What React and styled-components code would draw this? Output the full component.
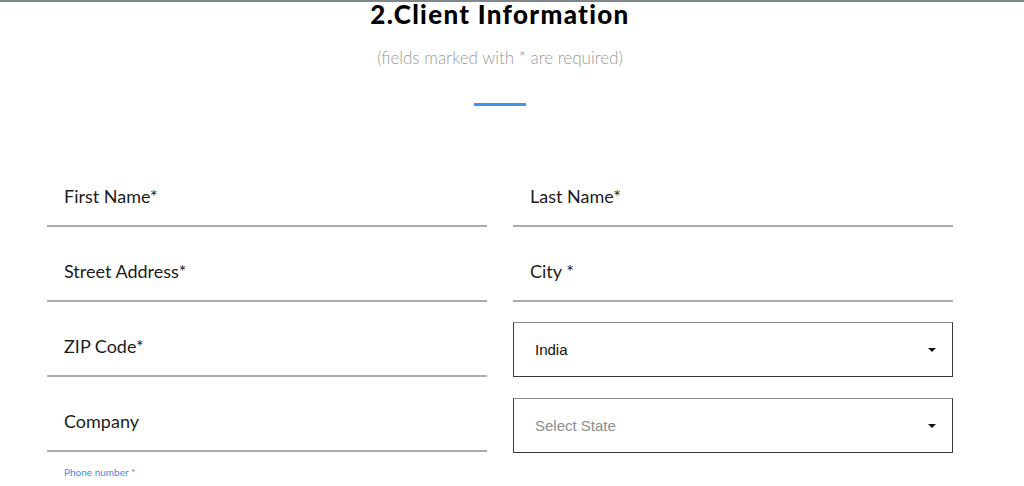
import React from "react";
import styled, { createGlobalStyle } from "styled-components";

const GlobalStyle = createGlobalStyle`
  html, body {
    margin: 0;
    padding: 0;
    background: #ffffff;
  }
  body {
    border-top: 2px solid #7f888c;
    font-family: "Lato", "Liberation Sans", sans-serif;
  }
`;

const Section = styled.div`
  width: 906px;
  margin-left: 47px;
  display: flex;
  flex-direction: column;
  align-items: center;
`;

const Title = styled.h2`
  margin: 0;
  font-family: "Lato", "Liberation Sans", sans-serif;
  font-weight: 900;
  font-size: 26px;
  line-height: 24px;
  letter-spacing: 1.3px;
  color: #000;
`;

const Subtitle = styled.p`
  margin: 21px 0 0;
  font-size: 17px;
  font-weight: 300;
  color: #9a9a9a;
`;

const Divider = styled.div`
  width: 52px;
  height: 3px;
  background: #3d94e8;
  margin-top: 35px;
`;

const Grid = styled.div`
  width: 100%;
  display: grid;
  grid-template-columns: 440px 440px;
  column-gap: 26px;
  margin-top: 46px;
`;

const Column = styled.div`
  display: flex;
  flex-direction: column;
`;

const Field = styled.div`
  height: 75px;
  box-sizing: border-box;
  border-bottom: 2px solid #ababab;
  display: flex;
  align-items: flex-start;
  padding: 33px 0 0 17px;
  font-size: 18px;
  color: #1c1c1c;
`;

const SelectBox = styled.div`
  height: 55px;
  box-sizing: border-box;
  border: 1px solid #3a3a3a;
  border-top-color: #8a8a8a;
  display: flex;
  align-items: center;
  justify-content: space-between;
  padding: 0 16px 0 21px;
  margin-top: ${(p) => p.$top}px;
  font-family: "Liberation Sans", Arial, sans-serif;
  font-size: 15px;
  color: ${(p) => (p.$placeholder ? "#8d8d8d" : "#111")};
`;

const Caret = styled.span`
  width: 0;
  height: 0;
  border-left: 4px solid transparent;
  border-right: 4px solid transparent;
  border-top: 4px solid #111;
`;

const SmallLabel = styled.div`
  font-size: 10px;
  color: #4a86e8;
  padding: 14px 0 0 17px;
`;

export default function App() {
  return (
    <>
      <GlobalStyle />
      <Section>
        <Title>2.Client Information</Title>
        <Subtitle>(fields marked with * are required)</Subtitle>
        <Divider />
        <Grid>
          <Column>
            <Field>First Name*</Field>
            <Field>Street Address*</Field>
            <Field>ZIP Code*</Field>
            <Field>Company</Field>
            <SmallLabel>Phone number *</SmallLabel>
          </Column>
          <Column>
            <Field>Last Name*</Field>
            <Field>City *</Field>
            <SelectBox $top={20}>
              India
              <Caret />
            </SelectBox>
            <SelectBox $top={21} $placeholder>
              Select State
              <Caret />
            </SelectBox>
          </Column>
        </Grid>
      </Section>
    </>
  );
}
